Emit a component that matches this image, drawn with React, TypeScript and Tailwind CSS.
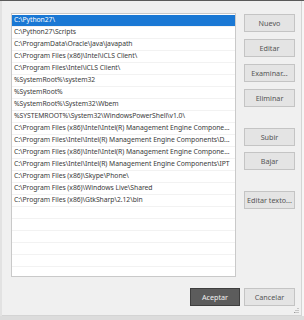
import React from "react";

const paths = [
  "C:\\Python27\\",
  "C:\\Python27\\Scripts",
  "C:\\ProgramData\\Oracle\\Java\\javapath",
  "C:\\Program Files (x86)\\Intel\\iCLS Client\\",
  "C:\\Program Files\\Intel\\iCLS Client\\",
  "%SystemRoot%\\system32",
  "%SystemRoot%",
  "%SystemRoot%\\System32\\Wbem",
  "%SYSTEMROOT%\\System32\\WindowsPowerShell\\v1.0\\",
  "C:\\Program Files (x86)\\Intel\\Intel(R) Management Engine Compone...",
  "C:\\Program Files\\Intel\\Intel(R) Management Engine Components\\D...",
  "C:\\Program Files (x86)\\Intel\\Intel(R) Management Engine Compone...",
  "C:\\Program Files\\Intel\\Intel(R) Management Engine Components\\IPT",
  "C:\\Program Files (x86)\\Skype\\Phone\\",
  "C:\\Program Files (x86)\\Windows Live\\Shared",
  "C:\\Program Files (x86)\\GtkSharp\\2.12\\bin",
  "",
  "",
  "",
  "",
  "",
  "",
];

function Btn({ label, className = "" }: { label: string; className?: string }) {
  return (
    <button
      type="button"
      className={
        "flex h-[18px] w-[51px] items-center justify-center border border-[#c4c4c4] bg-[#e4e4e4] text-[7.2px] text-[#555] " +
        className
      }
    >
      {label}
    </button>
  );
}

export default function App() {
  return (
    <div
      className="relative flex h-[320px] w-[304px] flex-col overflow-hidden bg-[#ececec]"
      style={{ fontFamily: '"Noto Sans", "Open Sans", sans-serif' }}
    >
      <div className="h-px w-full bg-[#5a5a5a]" />
      <div className="flex h-[315px]">
        <div className="w-[2px] bg-[#e2e2e2]" />
        <div className="relative flex flex-1 flex-col border-r border-b border-[#d4d4d4] bg-[#f0f0f0] pl-[9px] pr-[6px] pt-[12px]">
          <div className="flex">
            {/* path list */}
            <div className="h-[264px] w-[225px] overflow-hidden border border-[#c9c9c9] bg-white pt-px">
              {paths.map((p, i) => (
                <div
                  key={i}
                  className={
                    "flex h-[12px] items-center whitespace-nowrap border-b border-[#f2f2f2] pl-[2px] text-[6.8px] leading-none tracking-[-0.05px] " +
                    (i === 0 ? "bg-[#1a78d4] text-white" : "text-[#3a3a3a]")
                  }
                >
                  {p}
                </div>
              ))}
            </div>
            {/* side buttons */}
            <div className="ml-[8px] flex flex-col pt-px">
              <div className="flex flex-col gap-[7px]">
                <Btn label="Nuevo" />
                <Btn label="Editar" />
                <Btn label="Examinar..." />
                <Btn label="Eliminar" />
              </div>
              <div className="mt-[21px] flex flex-col gap-[6px]">
                <Btn label="Subir" />
                <Btn label="Bajar" />
              </div>
              <div className="mt-[21px]">
                <Btn label="Editar texto..." />
              </div>
            </div>
          </div>
          {/* footer buttons */}
          <div className="mt-[11px] flex justify-end gap-[4px]">
            <button
              type="button"
              className="flex h-[18px] w-[50px] items-center justify-center border border-[#3e3e3e] bg-[#5c5c5c] text-[7.2px] text-[#f0f0f0]"
            >
              Aceptar
            </button>
            <Btn label="Cancelar" className="w-[51px]" />
          </div>
          {/* resize grip */}
          <svg className="absolute bottom-[2px] right-[2px]" width="5" height="5" viewBox="0 0 5 5">
            <rect x="3.5" y="0" width="1" height="1" fill="#9a9a9a" />
            <rect x="1.5" y="2" width="1" height="1" fill="#9a9a9a" />
            <rect x="3.5" y="2" width="1" height="1" fill="#9a9a9a" />
            <rect x="0" y="4" width="1" height="1" fill="#9a9a9a" />
            <rect x="1.5" y="4" width="1" height="1" fill="#9a9a9a" />
            <rect x="3.5" y="4" width="1" height="1" fill="#9a9a9a" />
          </svg>
        </div>
        <div className="w-[2px] bg-[#f6f6f6]" />
      </div>
      <div className="flex-1 bg-[#dcdcdc]" />
    </div>
  );
}
